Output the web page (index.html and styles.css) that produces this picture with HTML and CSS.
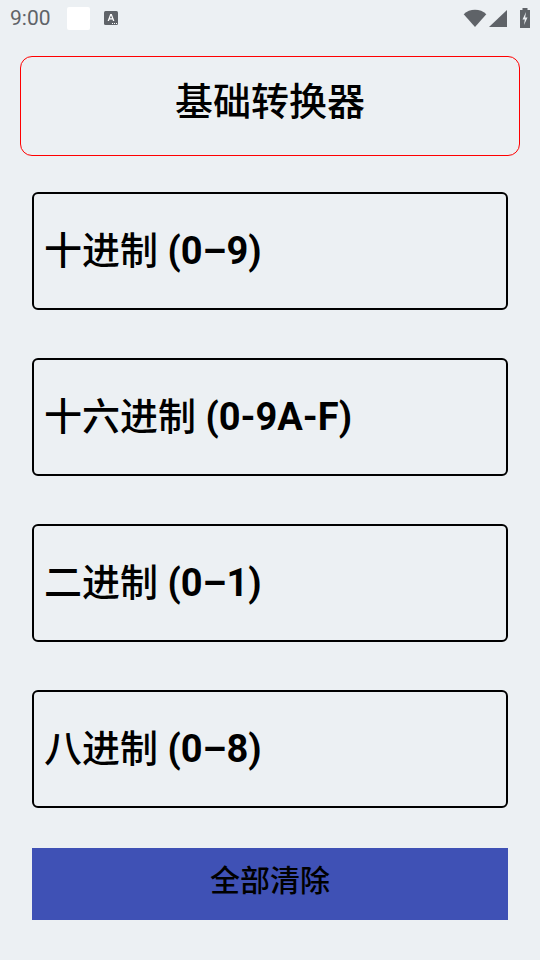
FILE: index.html
```html
<!DOCTYPE html>
<html lang="zh">
  <head>
    <meta charset="UTF-8" />
    <meta name="viewport" content="width=device-width, initial-scale=1.0" />
    <title>基础转换器</title>
    <link rel="stylesheet" href="styles.css">
  </head>
  <body>
    <div class="status-bar">
      <span class="time">9:00</span>
      <span class="white-box"></span>
      <svg class="a-icon" width="16" height="16" viewBox="0 0 16 16">
        <rect x="1" y="1" width="14" height="14" rx="1.5" fill="#5f6368" />
        <path d="M4.6 11 7.2 4h1.6l2.6 7H10l-.5-1.5h-3L6 11zM6.9 8.300h2.200L8 5.400z" fill="#fff" />
        <path d="M9 13h1v1H9zM11 13h1v1h-1zM13 13h1v1h-1z" fill="#fff" />
      </svg>
      <span class="status-right">
        <svg class="wifi" width="24" height="20" viewBox="0 0 24 20">
          <path d="M.7 6.200C3.800 3.300 7.700 1.800 12 1.800s8.200 1.500 11.300 4.400L12 19z" fill="#5f6368" />
        </svg>
        <svg class="signal" width="20" height="20" viewBox="0 0 20 20">
          <path d="M1 19 19 2v17z" fill="#5f6368" />
        </svg>
        <svg width="12" height="22" viewBox="0 0 12 22">
          <path d="M3.500 1h5v2H11v18H1V3h2.500z" fill="#5f6368" />
          <path d="M7 5 3.500 12.500h2.300L5 18l3.500-7.500H6.200z" fill="#ebeef1" />
        </svg>
      </span>
    </div>

    <div class="title-box">基础转换器</div>

    <div class="fields">
      <div class="field"><span>十进制 <b>(0–9)</b></span></div>
      <div class="field"><span>十六进制 <b>(0-9A-F)</b></span></div>
      <div class="field"><span>二进制 <b>(0–1)</b></span></div>
      <div class="field"><span>八进制 <b>(0–8)</b></span></div>
    </div>

    <div class="clear-btn">全部清除</div>
  </body>
</html>
```

FILE: styles.css
```css
html,
body {
  margin: 0;
  padding: 0;
}

body {
  width: 540px;
  height: 960px;
  overflow: hidden;
  background: #ecf0f3;
  font-family: Roboto, "Noto Sans CJK SC", sans-serif;
  color: #000;
}

.status-bar {
  display: flex;
  align-items: center;
  height: 36px;
  padding: 0 9px 0 10px;
  box-sizing: border-box;
}

.time {
  font-size: 21px;
  color: #5f6368;
  width: 57px;
}

.white-box {
  width: 23px;
  height: 23px;
  background: #fff;
  border-radius: 2px;
  margin-right: 13px;
}

.status-right {
  display: flex;
  align-items: center;
  margin-left: auto;
}

.wifi {
  margin-right: 1px;
}

.signal {
  margin-right: 11px;
}

.title-box {
  display: flex;
  justify-content: center;
  align-items: center;
  height: 100px;
  margin: 20px 20px 0;
  padding-bottom: 16px;
  box-sizing: border-box;
  border: 1px solid #f00;
  border-radius: 12px;
  font-size: 38px;
  font-weight: 500;
}

.fields {
  display: flex;
  flex-direction: column;
  gap: 48px;
  margin: 36px 32px 0;
}

.field {
  display: flex;
  align-items: center;
  height: 118px;
  box-sizing: border-box;
  border: 2px solid #000;
  border-radius: 6px;
  padding: 0 0 8px 10px;
  font-size: 38px;
  font-weight: 500;
}

.field b {
  font-weight: 700;
}

.clear-btn {
  display: flex;
  justify-content: center;
  align-items: center;
  height: 72px;
  margin: 40px 32px 0;
  padding-bottom: 12px;
  box-sizing: border-box;
  background: #3f51b5;
  font-size: 30px;
  font-weight: 500;
}
```
